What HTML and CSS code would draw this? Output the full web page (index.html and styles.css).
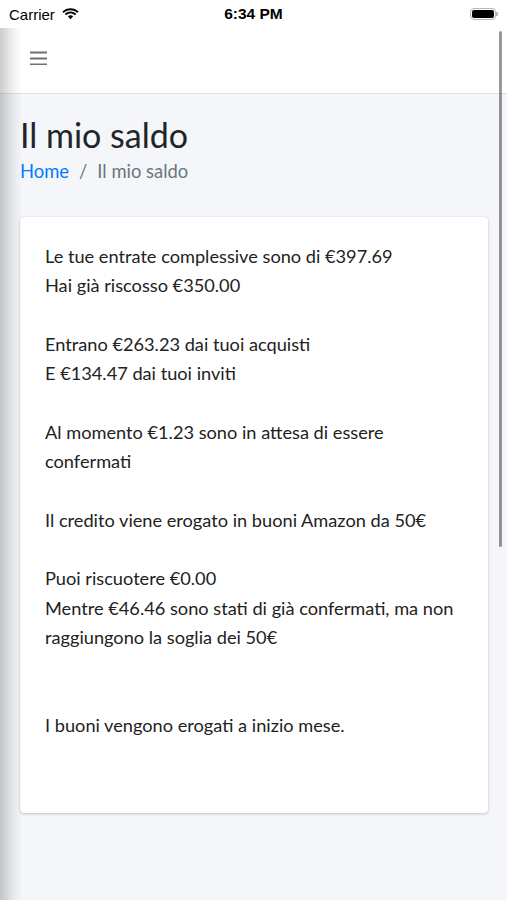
FILE: index.html
```html
<!DOCTYPE html>
<html>
<head>
<meta name="viewport" content="width=device-width, initial-scale=1">
<link rel="stylesheet" href="styles.css">
</head>
<body>

<div class="statusbar">
  <div class="carrier">Carrier
    <svg class="wifi" width="17" height="12" viewBox="0 0 17 12">
      <path d="M8.5 2.2c2.6 0 5 1 6.8 2.7l1.3-1.4C14.4 1.4 11.6.2 8.5.2S2.6 1.4.4 3.5l1.3 1.4C3.5 3.2 5.9 2.2 8.5 2.2z" fill="#000"/>
      <path d="M8.5 5.6c1.7 0 3.2.6 4.4 1.7l1.3-1.4C12.7 4.5 10.7 3.6 8.5 3.6S4.3 4.5 2.8 5.9l1.3 1.4c1.2-1.1 2.7-1.7 4.4-1.7z" fill="#000"/>
      <path d="M8.5 7.2c-1 0-2 .4-2.7 1.1L8.5 11.3l2.7-3C10.5 7.6 9.5 7.2 8.5 7.2z" fill="#000"/>
    </svg>
  </div>
  <div class="clock">6:34 PM</div>
  <div class="battery">
    <span class="battery-body"><span class="battery-level"></span></span>
    <span class="battery-tip"></span>
  </div>
</div>

<div class="wrapper">
  <nav class="main-header">
    <a class="nav-toggle" href="#">
      <svg width="17" height="14" viewBox="0 0 17 14">
        <rect x="0" y="0.5" width="17" height="2" fill="#707070"/>
        <rect x="0" y="6.5" width="17" height="2" fill="#707070"/>
        <rect x="0" y="12.5" width="17" height="2" fill="#707070"/>
      </svg>
    </a>
  </nav>

  <div class="content-wrapper">
    <section class="content-header">
      <h1>Il mio saldo</h1>
      <ol class="breadcrumb">
        <li><a href="#">Home</a></li>
        <li class="sep">/</li>
        <li class="active">Il mio saldo</li>
      </ol>
    </section>

    <section class="content">
      <div class="card">
        <div class="card-body">
          Le tue entrate complessive sono di €397.69<br>
          Hai già riscosso €350.00<br>
          <br>
          Entrano €263.23 dai tuoi acquisti<br>
          E €134.47 dai tuoi inviti<br>
          <br>
          Al momento €1.23 sono in attesa di essere confermati<br>
          <br>
          Il credito viene erogato in buoni Amazon da 50€<br>
          <br>
          Puoi riscuotere €0.00<br>
          Mentre €46.46 sono stati di già confermati, ma non raggiungono la soglia dei 50€<br>
          <br>
          <br>
          I buoni vengono erogati a inizio mese.
        </div>
      </div>
    </section>
  </div>

  <div class="side-shadow"></div>
  <div class="scroll-indicator"></div>
</div>

</body>
</html>
```

FILE: styles.css
```css
* {
  box-sizing: border-box;
}

html, body {
  margin: 0;
  padding: 0;
}

body {
  width: 507px;
  height: 900px;
  overflow: hidden;
  background-color: #f4f6f9;
  font-family: Lato, "Noto Sans", sans-serif;
  color: #212529;
}

/* iOS status bar */
.statusbar {
  height: 28px;
  background-color: #fff;
  display: flex;
  align-items: center;
  justify-content: space-between;
  padding: 0 9px 0 9px;
  font-family: "Liberation Sans", Arial, sans-serif;
  color: #000;
  position: relative;
}

.carrier {
  display: flex;
  align-items: center;
  gap: 7px;
  font-size: 15px;
}

.clock {
  position: absolute;
  left: 0;
  right: 0;
  text-align: center;
  font-size: 15.5px;
  font-weight: bold;
}

.battery {
  display: flex;
  align-items: center;
}

.battery-body {
  width: 26px;
  height: 12px;
  border: 1px solid #b5b5b5;
  border-radius: 4px;
  padding: 1px;
  display: flex;
}

.battery-level {
  flex: 1;
  background-color: #000;
  border-radius: 2px;
}

.battery-tip {
  width: 2px;
  height: 4px;
  background-color: #b5b5b5;
  border-radius: 0 1px 1px 0;
}

.wrapper {
  position: relative;
  height: 872px;
}

/* top navbar */
.main-header {
  height: 66px;
  background-color: #fff;
  border-bottom: 1px solid #dee2e6;
  display: flex;
  align-items: flex-start;
  padding: 23px 0 0 30px;
}

.nav-toggle {
  display: flex;
}

/* page content */
.content-wrapper {
  padding: 0 19px 0 20px;
}

.content-header {
  padding-top: 21px;
}

.content-header h1 {
  margin: 0;
  font-size: 34px;
  font-weight: normal;
  line-height: 40px;
  color: #212529;
}

.breadcrumb {
  list-style: none;
  margin: 0;
  padding: 0;
  display: flex;
  gap: 10px;
  font-size: 18.4px;
  line-height: 33px;
  color: #6c757d;
}

.breadcrumb a {
  color: #007bff;
  text-decoration: none;
}

.content {
  padding-top: 29px;
}

.card {
  background-color: #fff;
  border-radius: 4px;
  box-shadow: 0 0 1px rgba(0,0,0,.125), 0 1px 3px rgba(0,0,0,.2);
}

.card-body {
  padding: 25px 25px 73px 25px;
  font-size: 18.2px;
  line-height: 29.3px;
  color: #222;
}

/* overlays */
.side-shadow {
  position: absolute;
  top: 0;
  left: 0;
  bottom: 0;
  width: 22px;
  background: linear-gradient(to right, rgba(0,0,0,.2), rgba(0,0,0,.06) 60%, rgba(0,0,0,0));
}

.scroll-indicator {
  position: absolute;
  top: 3px;
  right: 5px;
  width: 3px;
  height: 516px;
  border-radius: 2px;
  background-color: rgba(0,0,0,.4);
}
```
